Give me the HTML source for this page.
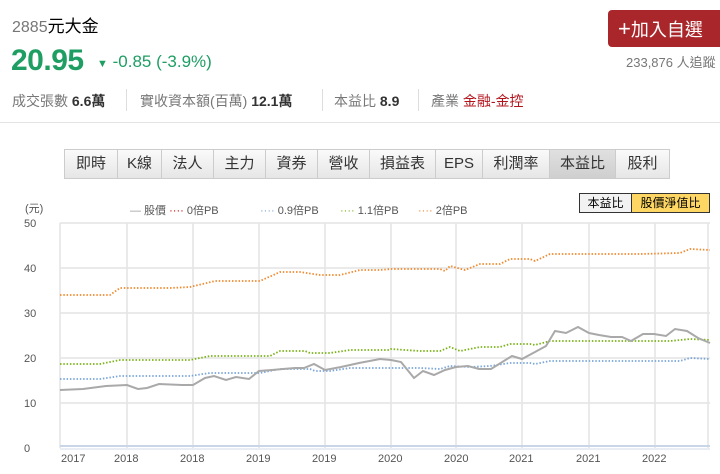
<!DOCTYPE html>
<html><head><meta charset="utf-8"><style>
body{margin:0;width:720px;height:474px;overflow:hidden;background:#fff;font-family:"Liberation Sans","Noto Sans CJK TC",sans-serif;position:relative}
.a{position:absolute;white-space:nowrap}
.tabs{position:absolute;left:64px;top:149px;height:28px;display:flex;border:1px solid #ccc;background:linear-gradient(#fafafa,#e6e6e6)}
.tabs div{border-right:1px solid #ccc;font-size:15px;color:#333;text-align:center;line-height:28px}
.tabs div:last-child{border-right:none}
.sep{position:absolute;top:89px;width:1px;height:22px;background:#ddd}
</style></head><body>
<div class="a" style="left:12px;top:12px;font-size:16px;color:#777">2885<span style="color:#000;font-size:17px">元大金</span></div>
<div class="a" style="left:11px;top:44px;font-size:30px;font-weight:bold;color:#1e9e63;letter-spacing:-0.5px">20.95</div>
<div class="a" style="left:97px;top:52px;font-size:17px;color:#1e9e63"><span style="font-size:11px">▼</span> -0.85 (-3.9%)</div>
<div class="a" style="left:12px;top:91px;font-size:14px;color:#777">成交張數 <b style="color:#333">6.6萬</b></div>
<div class="sep" style="left:126px"></div>
<div class="a" style="left:140px;top:91px;font-size:14px;color:#777">實收資本額(百萬) <b style="color:#333">12.1萬</b></div>
<div class="sep" style="left:322px"></div>
<div class="a" style="left:334px;top:91px;font-size:14px;color:#777">本益比 <b style="color:#333">8.9</b></div>
<div class="sep" style="left:418px"></div>
<div class="a" style="left:431px;top:91px;font-size:14px;color:#777">產業 <span style="color:#b3141c">金融-金控</span></div>
<div class="a" style="left:608px;top:10px;width:120px;height:37px;background:#a9262b;border-radius:4px;color:#fff;font-size:18px;line-height:37px;padding-left:10px;box-sizing:border-box"><span style="font-size:22px">+</span>加入自選</div>
<div class="a" style="left:626px;top:52px;font-size:13px;color:#777">233,876 人追蹤</div>
<div class="a" style="left:0;top:122px;width:720px;height:1px;background:#e3e3e3"></div>
<div class="tabs">
<div style="width:52px">即時</div><div style="width:43px">K線</div><div style="width:51px">法人</div><div style="width:51px">主力</div><div style="width:51px">資券</div><div style="width:51px">營收</div><div style="width:65px">損益表</div><div style="width:46px">EPS</div><div style="width:66px">利潤率</div><div style="width:65px;background:linear-gradient(#e0e0e0,#cfcfcf)">本益比</div><div style="width:53px">股利</div>
</div>
<div class="a" style="left:25px;top:200px;font-size:11px;color:#555">(元)</div>
<div class="a" style="left:130px;top:202px;font-size:11px;color:#555"><span style="color:#999">—</span> 股價 <span style="color:#c00">····</span> 0倍PB</div>
<div class="a" style="left:260px;top:202px;font-size:11px;color:#555"><span style="color:#7aa6d8">····</span> 0.9倍PB</div>
<div class="a" style="left:340px;top:202px;font-size:11px;color:#555"><span style="color:#7ab317">····</span> 1.1倍PB</div>
<div class="a" style="left:418px;top:202px;font-size:11px;color:#555"><span style="color:#f08a30">····</span> 2倍PB</div>
<div class="a" style="left:579px;top:193px;width:131px;height:20px;border:1px solid #333;box-sizing:border-box;font-size:12px;display:flex;line-height:18px">
<div style="width:51px;text-align:center;background:#f2f2f2;border-right:1px solid #333">本益比</div><div style="flex:1;text-align:center;background:#fdd663">股價淨值比</div></div>
<svg class="a" style="left:0;top:0" width="720" height="474">
<g stroke="#e4e4e4" stroke-width="1.5" fill="none">
<line x1="60" y1="223" x2="710" y2="223"/><line x1="60" y1="268" x2="710" y2="268"/><line x1="60" y1="313" x2="710" y2="313"/><line x1="60" y1="358" x2="710" y2="358"/><line x1="60" y1="403" x2="710" y2="403"/>
<line x1="60" y1="223" x2="60" y2="448"/><line x1="127" y1="223" x2="127" y2="448"/><line x1="193" y1="223" x2="193" y2="448"/><line x1="259" y1="223" x2="259" y2="448"/><line x1="325" y1="223" x2="325" y2="448"/><line x1="391" y1="223" x2="391" y2="448"/><line x1="456" y1="223" x2="456" y2="448"/><line x1="522" y1="223" x2="522" y2="448"/><line x1="589" y1="223" x2="589" y2="448"/><line x1="655" y1="223" x2="655" y2="448"/><line x1="708" y1="223" x2="708" y2="448"/>
</g>
<line x1="60" y1="446" x2="710" y2="446" stroke="#c9d6e8" stroke-width="2"/>
<line x1="60" y1="449" x2="710" y2="449" stroke="#d0dcea" stroke-width="1"/>
<g font-size="11" fill="#555" font-family="Liberation Sans,sans-serif">
<text x="24" y="227">50</text><text x="24" y="272">40</text><text x="24" y="317">30</text><text x="24" y="362">20</text><text x="24" y="407">10</text><text x="24" y="452">0</text>
<text x="61" y="462">2017</text><text x="114" y="462">2018</text><text x="180" y="462">2018</text><text x="246" y="462">2019</text><text x="312" y="462">2019</text><text x="378" y="462">2020</text><text x="444" y="462">2020</text><text x="509" y="462">2021</text><text x="576" y="462">2021</text><text x="642" y="462">2022</text>
</g>
<g fill="none" stroke-width="1.8" stroke-dasharray="1.5 1.8">
<polyline stroke="#f08a30" points="60,295 110,295 120,288 170,288 190,287 215,281 260,281 280,272 300,272 320,275 340,275 360,270 380,270 391,269 440,269 445,271 450,266 465,270 480,264 500,264 510,259 530,259 535,261 550,254 640,254 680,253 690,249 710,250"/>
<polyline stroke="#7ab317" points="60,364 100,364 120,360 190,360 210,356 270,356 280,351 305,351 310,353 330,353 350,350 390,350 391,349 420,351 440,351 450,347 460,351 480,347 500,347 510,344 530,344 535,345 550,341 640,341 670,341 690,339 710,340"/>
<polyline stroke="#7aa6d8" points="60,379 100,379 120,376 190,376 210,373 260,373 280,369 310,369 315,371 330,371 350,368 420,368 440,369 450,366 470,367 490,366 510,363 530,363 535,364 550,361 680,361 690,358 710,359"/>
</g>
<polyline fill="none" stroke="#a9a9a9" stroke-width="2" points="60,390 83,389 106,386 127,385 138,389 147,388 159,384 182,385 193,385 205,378 214,376 226,380 236,377 249,379 259,371 272,370 283,369 295,368 304,368 314,364 325,370 341,367 359,363 380,359 391,360 401,362 414,378 423,371 434,375 445,370 456,367 468,366 479,369 491,369 512,356 522,359 535,352 546,346 555,331 566,333 578,327 589,333 599,335 611,337 622,337 631,341 643,334 654,334 666,336 675,329 687,331 698,338 710,343"/>
</svg>
</body></html>
